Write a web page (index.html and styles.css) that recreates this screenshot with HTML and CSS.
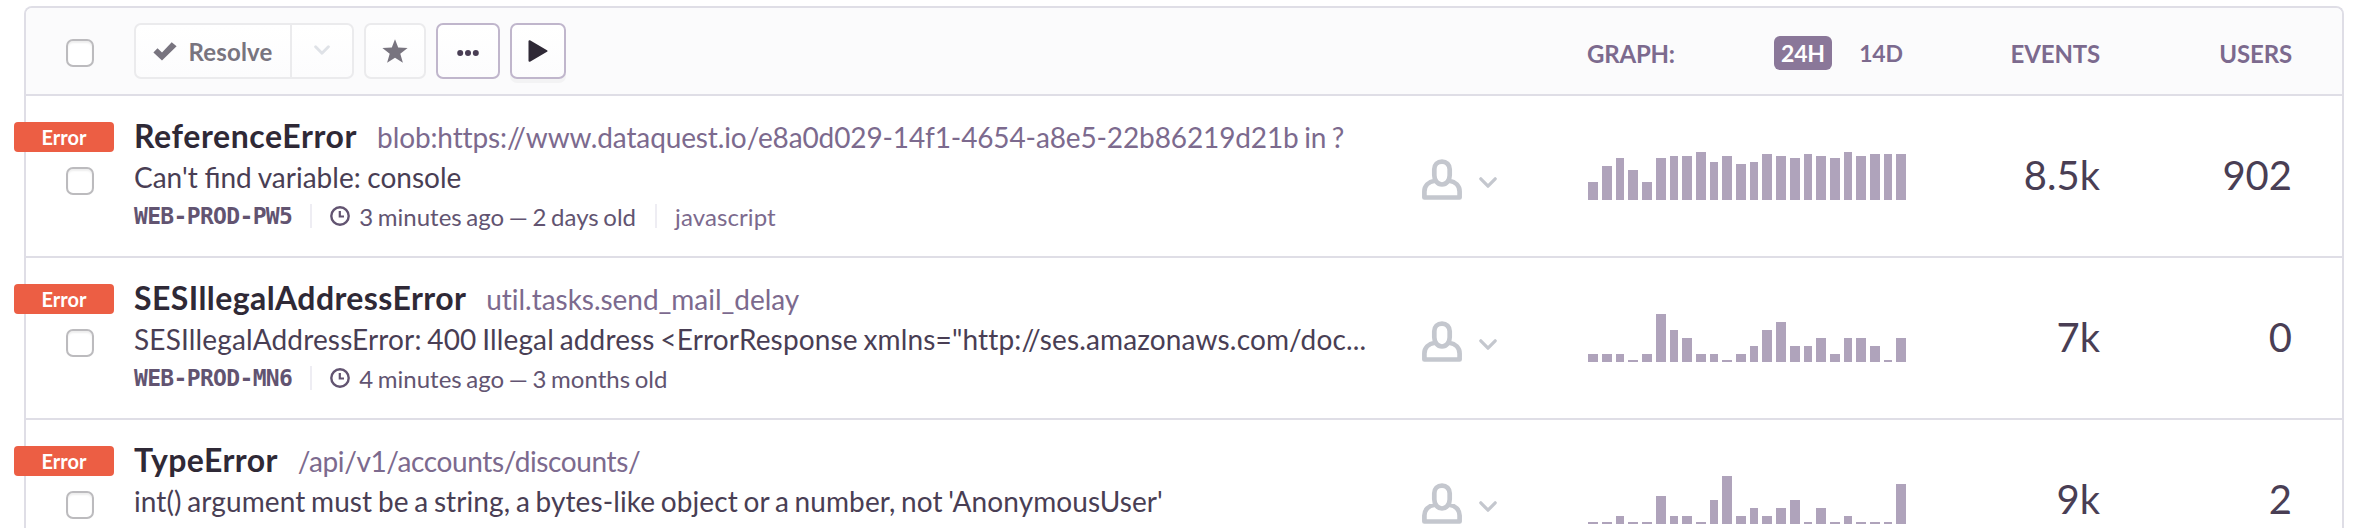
FILE: index.html
```
<!DOCTYPE html>
<html lang="en">
<head>
<meta charset="utf-8">
<title>Issues</title>
<link rel="stylesheet" href="styles.css">
</head>
<body>
<svg width="0" height="0" class="defs" aria-hidden="true">
  <symbol id="i-user" viewBox="0 0 40 42">
    <path d="M20 2.600c-4.400 0-7.700 3.200-7.700 7.600v6c0 5.200 3.200 9.300 7.700 9.300s7.700-4.100 7.700-9.300v-6c0-4.400-3.300-7.600-7.700-7.600zM12.800 21.800C6.500 22.800 2.400 27 2.400 32.500v6h35.200v-6c0-5.500-4.100-9.700-10.400-10.700" fill="none" stroke="currentColor" stroke-width="4.700" stroke-linejoin="round"/>
  </symbol>
  <symbol id="i-chev" viewBox="0 0 18 12">
    <path d="M1.800 1.800 9 9.200l7.200-7.400" fill="none" stroke="currentColor" stroke-width="3.200" stroke-linecap="round" stroke-linejoin="round"/>
  </symbol>
  <symbol id="i-clock" viewBox="0 0 20 20">
    <circle cx="10" cy="10" r="8.700" fill="none" stroke="currentColor" stroke-width="2.400"/>
    <path d="M9.800 5v5.500H14" fill="none" stroke="currentColor" stroke-width="2.200"/>
  </symbol>
</svg>
<main class="panel">
  <header class="head">
    <span class="check"></span>
    <div class="tools">
      <div class="group dim">
        <span class="btn resolve"><svg class="tick" viewBox="0 0 24 20"><path d="M4.500 7.200 9 11.400 18.700 1.200 23.600 5.200 9 19.600.4 11.400z" fill="currentColor"/></svg>Resolve</span>
        <span class="btn drop"><svg class="chev"><use href="#i-chev"/></svg></span>
      </div>
      <span class="btn dim star"><svg viewBox="0 0 26 24" width="26" height="24"><path d="M13 .3l3.200 8.300 9.400.4-7.300 5.800 2.600 8.900L13 18.700l-7.900 5 2.600-8.900L.4 9l9.400-.4z" fill="currentColor"/></svg></span>
      <span class="btn more"><svg viewBox="0 0 22 6" width="22" height="6"><g fill="currentColor"><circle cx="3.200" cy="3" r="3"/><circle cx="11" cy="3" r="3"/><circle cx="18.800" cy="3" r="3"/></g></svg></span>
      <span class="btn play"><svg viewBox="0 0 20 22" width="20" height="22"><path d="M1.500 1.200v19.600L18.500 11z" fill="currentColor" stroke="currentColor" stroke-width="2" stroke-linejoin="round"/></svg></span>
    </div>
    <div class="range"><span>GRAPH:</span><span class="pill on">24H</span><span class="pill">14D</span></div>
    <span class="num">EVENTS</span>
    <span class="num users">USERS</span>
  </header>
  <div id="rows"></div>
</main>
<script src="rows.js"></script>
</body>
</html>
```
FILE: rows.js
```
const issues = [
  { title: 'ReferenceError', culprit: 'blob:https://www.dataquest.io/e8a0d029-14f1-4654-a8e5-22b86219d21b in ?',
    message: "Can't find variable: console", id: 'WEB-PROD-PW5', age: '3 minutes ago — 2 days old', logger: 'javascript',
    events: '8.5k', users: '902',
    bars: [18,34,42,30,18,42,44,44,48,38,44,36,38,46,44,42,46,44,42,48,44,46,46,46] },
  { title: 'SESIllegalAddressError', culprit: 'util.tasks.send_mail_delay',
    message: 'SESIllegalAddressError: 400 Illegal address <ErrorResponse xmlns="http://ses.amazonaws.com/doc...', id: 'WEB-PROD-MN6', age: '4 minutes ago — 3 months old',
    events: '7k', users: '0',
    bars: [8,8,8,2,8,48,32,24,8,8,2,8,16,32,40,16,16,24,8,24,24,16,2,24] },
  { title: 'TypeError', culprit: '/api/v1/accounts/discounts/',
    message: "int() argument must be a string, a bytes-like object or a number, not 'AnonymousUser'",
    events: '9k', users: '2',
    bars: [2,2,8,2,2,28,8,8,2,24,48,8,16,8,16,24,2,16,2,8,2,2,2,40] }
];
// Columns that fall on the narrow step of the 24-hour grid.
const narrow = new Set([2, 6, 9, 12, 16, 19, 22]);
const esc = s => s.replace(/&/g, '&amp;').replace(/</g, '&lt;');

document.getElementById('rows').innerHTML = issues.map(i => `
  <article class="row">
    <span class="level">Error</span>
    <span class="check"></span>
    <div class="body">
      <div class="line1"><b class="title">${esc(i.title)}</b><span class="culprit">${esc(i.culprit)}</span></div>
      <div class="message">${esc(i.message)}</div>
      ${i.id ? `<div class="meta"><span class="short">${i.id}</span><span class="age"><svg class="clock"><use href="#i-clock"/></svg><span>${i.age}</span></span>${i.logger ? `<span class="logger">${i.logger}</span>` : ''}</div>` : ''}
    </div>
    <div class="assign"><svg class="user"><use href="#i-user"/></svg><svg class="chev"><use href="#i-chev"/></svg></div>
    <div class="graph">${i.bars.map((h, n) => `<i class="bar${narrow.has(n) ? ' thin' : ''}" style="height:${h}px"></i>`).join('')}</div>
    <span class="count">${i.events}</span>
    <span class="count users">${i.users}</span>
  </article>`).join('');
```
FILE: styles.css
```
* { box-sizing: border-box; }
html, body { margin: 0; height: 528px; overflow: hidden; background: #fff; }
body { padding: 6px 28px 0 24px; font-family: Lato, sans-serif; color: #493e54; }
.defs { position: absolute; }
svg { display: block; flex: none; }
.panel { height: 522px; border: 2px solid #dfdee6; border-bottom: 0; border-radius: 8px 8px 0 0; }
.head, .row { display: grid; grid-template-columns: 68px 1262px 192px 322px 190px 192px; padding-left: 40px; }
.head { height: 88px; align-items: center; background: #fbfbfc; border-bottom: 2px solid #dfdee6; border-radius: 6px 6px 0 0; color: #7c6a8e; font-size: 24px; font-weight: 700; }
.check { width: 28px; height: 28px; border: 2px solid #bcbbbe; border-radius: 7px; background: #fff; box-shadow: inset 0 2px 2px #eee; }
.head .check { margin-top: 4px; }
.tools { display: flex; gap: 10px; }
.btn { height: 56px; display: flex; align-items: center; justify-content: center; border: 2px solid #c0b6cc; border-radius: 7px; background: linear-gradient(#fff, #fcfcfd); color: #493e54; }
.group { display: flex; }
.dim, .dim .btn { border-color: #ebebed; color: #78747f; }
.resolve { width: 158px; gap: 11px; border-radius: 7px 0 0 7px; letter-spacing: .2px; }
.tick { width: 24px; height: 20px; }
.drop { width: 62px; border-left: 0; border-radius: 0 7px 7px 0; }
.drop .chev { width: 16px; height: 11px; color: #dfe2e7; margin-bottom: 2px; }
.star { width: 62px; }
.more { width: 64px; }
.more svg { margin-top: 4px; }
.play { width: 56px; color: #2f2936; box-shadow: 0 4px 0 #f3f3f4; }
.range { grid-column: 4; display: flex; align-items: center; margin-left: -1px; padding-top: 4px; letter-spacing: -.2px; }
.pill { width: 58px; height: 34px; line-height: 35px; text-align: center; border-radius: 6px; font-size: 23px; }
.pill + .pill { margin-left: 20px; }
.on { margin-left: auto; background: #8a7799; color: #fff; }
.num { padding-top: 4px; text-align: right; letter-spacing: -.15px; }
.row { position: relative; height: 162px; border-bottom: 2px solid #dfdee6; }
.row:last-child { height: 108px; border-bottom: 0; }
.row .check { margin-top: 71px; }
.level { position: absolute; left: -12px; top: 26px; width: 100px; height: 30px; border-radius: 4px; background: #ec5e44; color: #fff; font-size: 20px; font-weight: 700; line-height: 30px; text-align: center; }
.body { padding-top: 20px; white-space: nowrap; }
.line1 { display: flex; align-items: baseline; height: 41px; line-height: 40px; }
.title { color: #2f2936; font-size: 32px; font-weight: 700; letter-spacing: .42px; margin-right: 20px; }
.culprit { color: #7c6a8e; font-size: 28px; letter-spacing: -.04px; word-spacing: -1.500px; }
.message { height: 40px; line-height: 40px; font-size: 28px; letter-spacing: .15px; word-spacing: -1.600px; }
.row:first-child .title { letter-spacing: .6px; }
.row:first-child .culprit { letter-spacing: -.12px; }
.row:first-child .message { letter-spacing: 0; word-spacing: -.5px; }
.row:last-child .culprit { letter-spacing: -.38px; }
.row:last-child .message { letter-spacing: .1px; }
.meta { display: flex; align-items: center; height: 38px; font-size: 24px; word-spacing: -1.500px; color: #625471; }
.short { font: bold 23px "DejaVu Sans Mono", monospace; letter-spacing: -.66px; }
.age, .logger { display: flex; align-items: center; height: 24px; margin-left: 18px; padding-left: 18px; border-left: 2px solid #eeedf3; }
.clock { width: 20px; height: 20px; margin-right: 9px; }
.logger { margin-left: 19px; color: #7c6a8e; letter-spacing: .1px; }
.assign { display: flex; padding: 63px 0 0 26px; color: #c4c7ce; }
.user { width: 40px; height: 42px; }
.assign .chev { width: 18px; height: 12px; margin: 18px 0 0 17px; }
.graph { display: flex; align-items: flex-end; gap: 4px; height: 104px; }
.bar { width: 10px; background: #afa3bb; }
.thin { width: 8px; }
.count { font-size: 40px; line-height: 48px; padding-top: 55px; text-align: right; }
```
